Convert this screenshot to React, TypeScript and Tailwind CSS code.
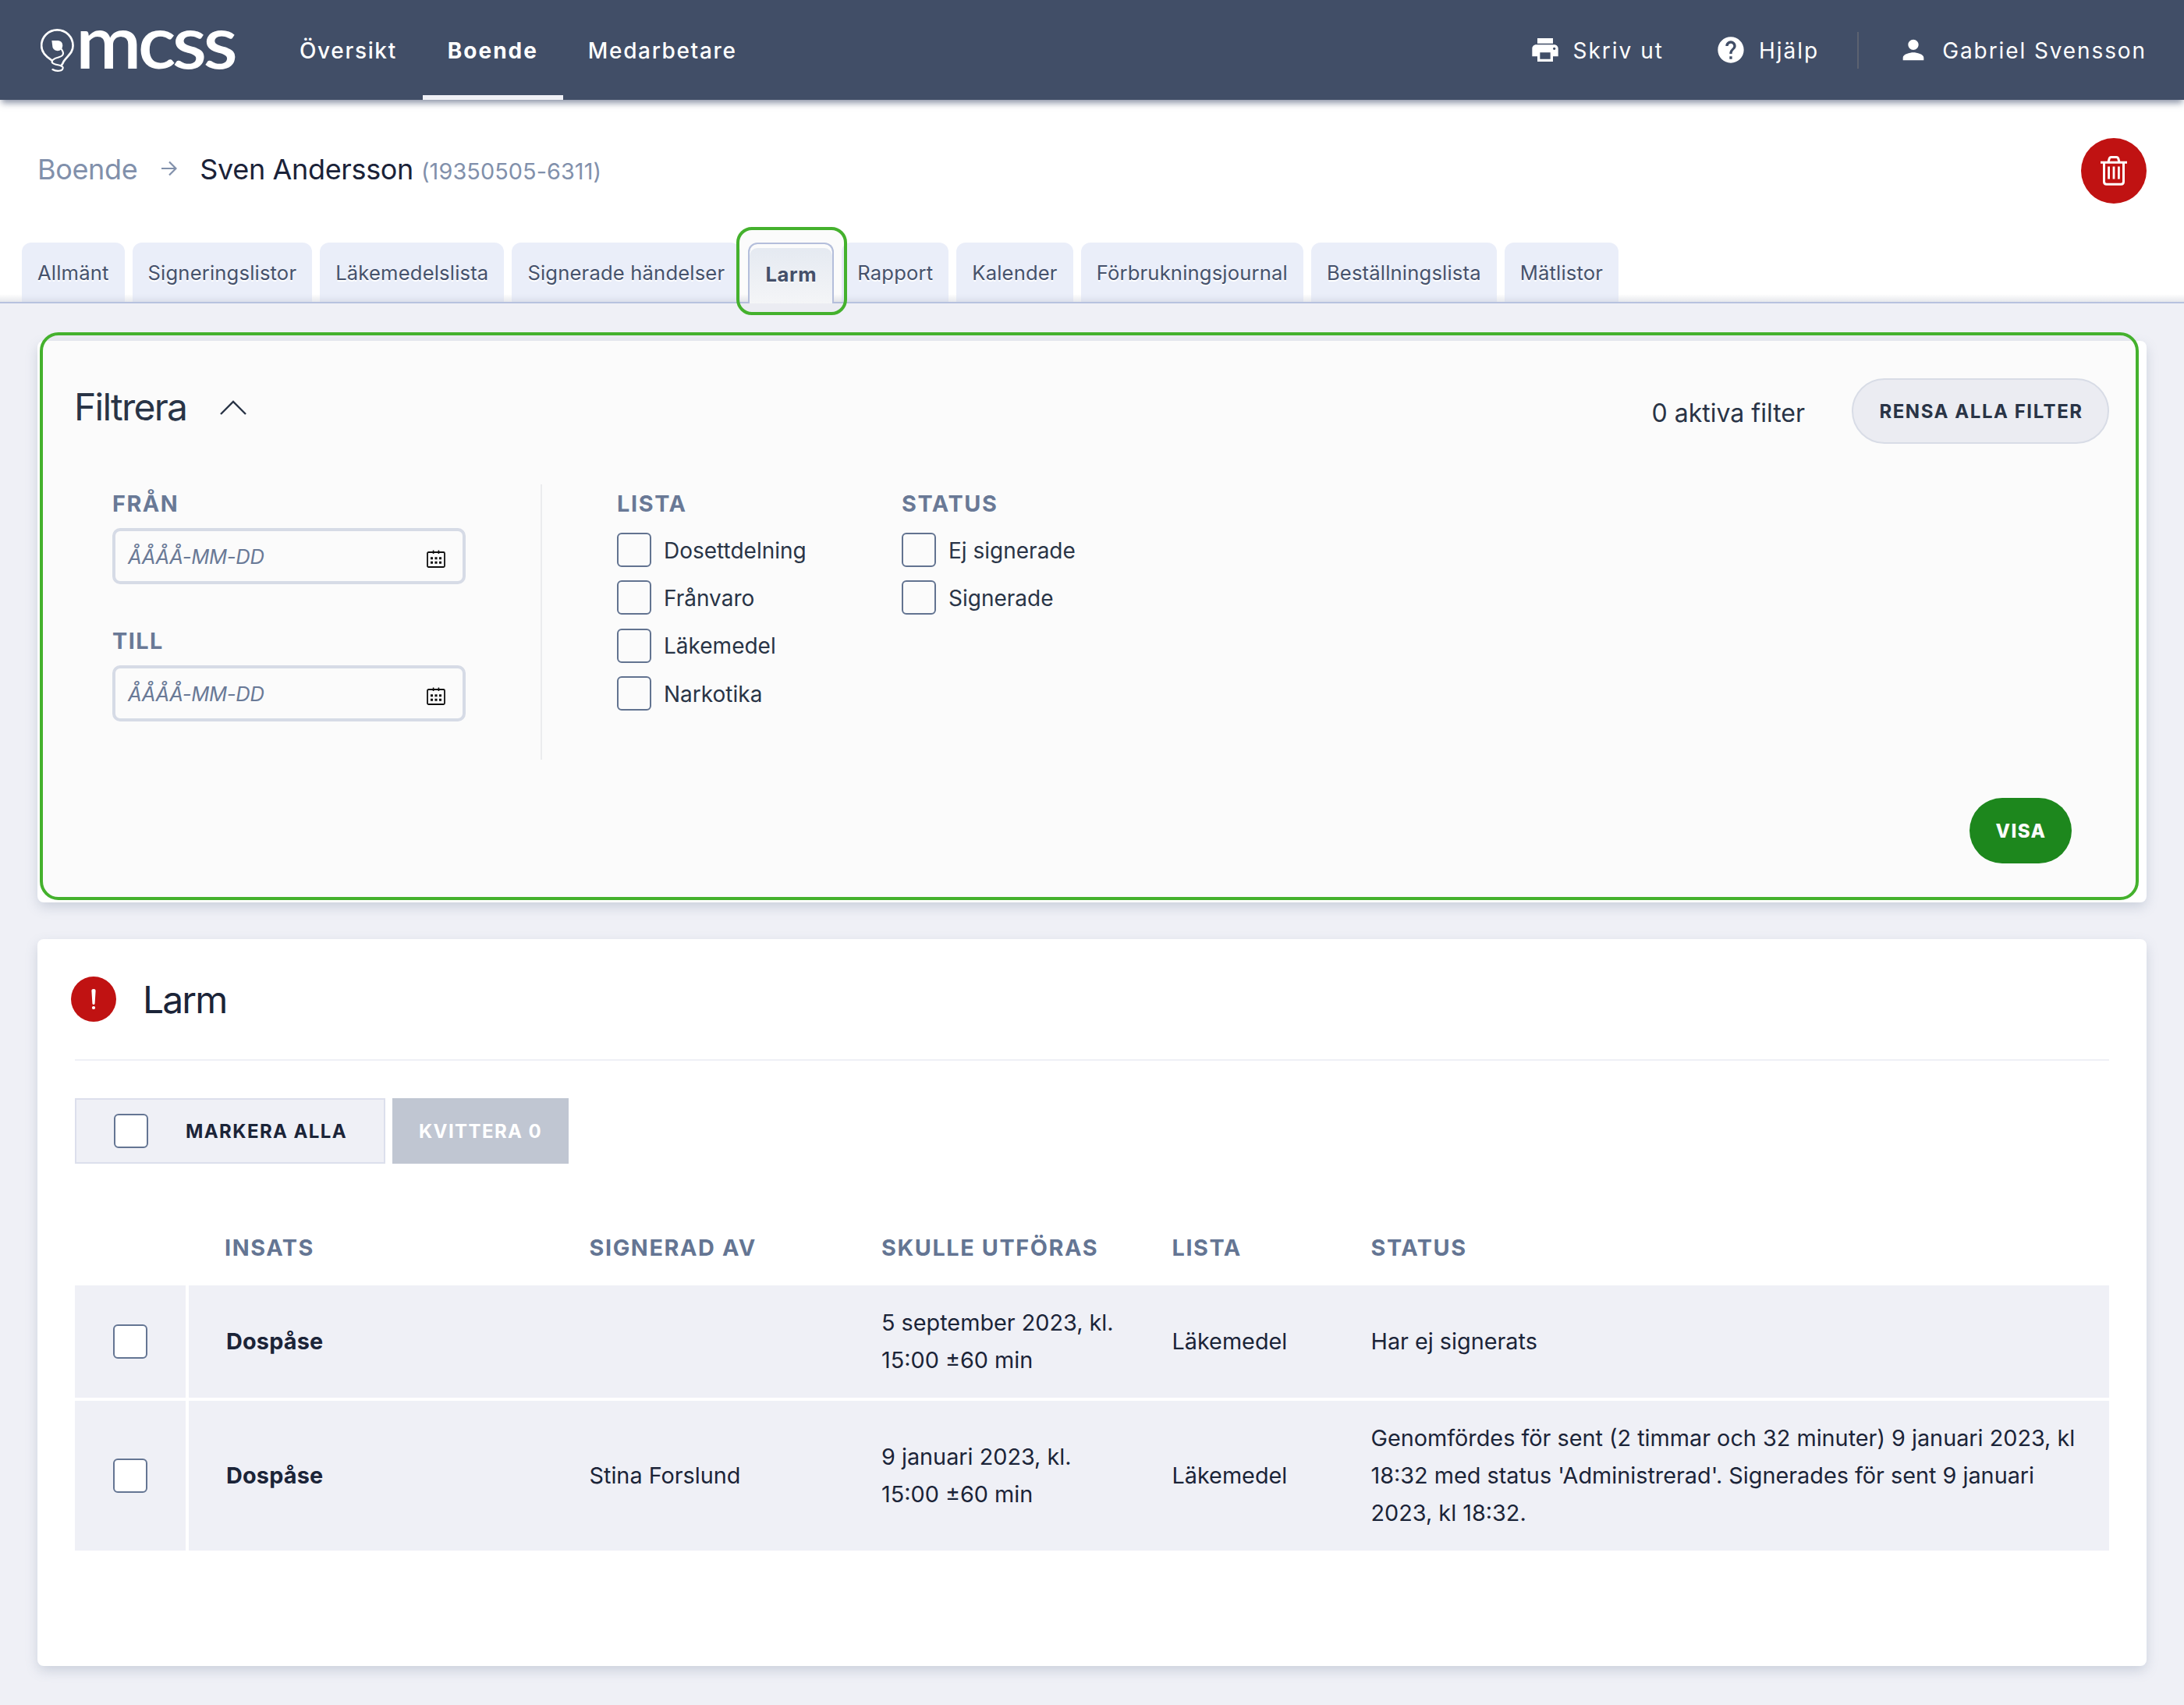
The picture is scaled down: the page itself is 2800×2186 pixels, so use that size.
import { MdHelp, MdPerson, MdPrint } from "react-icons/md"

const navItems = ["Översikt", "Boende", "Medarbetare"]

const tabs = [
  "Allmänt",
  "Signeringslistor",
  "Läkemedelslista",
  "Signerade händelser",
  "Larm",
  "Rapport",
  "Kalender",
  "Förbrukningsjournal",
  "Beställningslista",
  "Mätlistor",
]

const filterGroups = [
  { title: "Lista", options: ["Dosettdelning", "Frånvaro", "Läkemedel", "Narkotika"] },
  { title: "Status", options: ["Ej signerade", "Signerade"] },
]

const alarms = [
  {
    name: "Dospåse",
    signedBy: "",
    planned: "5 september 2023, kl. 15:00 ±60 min",
    list: "Läkemedel",
    status: "Har ej signerats",
    height: "h-36",
  },
  {
    name: "Dospåse",
    signedBy: "Stina Forslund",
    planned: "9 januari 2023, kl. 15:00 ±60 min",
    list: "Läkemedel",
    status:
      "Genomfördes för sent (2 timmar och 32 minuter) 9 januari 2023, kl 18:32 med status 'Administrerad'. Signerades för sent 9 januari 2023, kl 18:32.",
    height: "h-48",
  },
]

function Logo() {
  return (
    <div className="flex w-[331px] shrink-0 items-center pl-[52px]">
      <svg className="h-[57px] w-11 shrink-0" viewBox="35 45 132 172" fill="none" stroke="white" strokeLinecap="round">
        <path
          d="M76 168 C50 152 38 136 38 113 A61 61 0 0 1 160 113 C160 142 138 152 124 174 C121 180 120 186 114 190"
          strokeWidth="8"
        />
        <path d="M78 93 H103 Q120 95 120 113 Q119 133 100 133 Q80 131 80 110 Z" fill="white" stroke="none" />
        <path
          d="M115 126 C127 142 124 153 104 158 C84 163 74 172 81 180 C91 189 119 187 121 197 C123 213 95 214 81 205"
          strokeWidth="6.5"
        />
      </svg>
      <span className="-mt-[25px] ml-px origin-left scale-x-[1.07] font-[Lato,sans-serif] text-[95px] leading-none font-semibold tracking-[-4.4px]">
        mcss
      </span>
    </div>
  )
}

function Header() {
  return (
    <header className="relative z-10 flex h-32 bg-[#414e67] text-[28px] leading-none tracking-[2px] text-white shadow-[0_6px_8px_-2px_rgba(65,79,110,0.6)]">
      <Logo />
      <nav className="flex pl-[21px]">
        {navItems.map((item) => (
          <a
            key={item}
            className={
              item === "Boende"
                ? "ml-px flex w-[180px] items-center justify-center border-y-[6px] border-t-transparent border-b-[#eff0f6] pt-0.5 font-bold"
                : "flex items-center px-8 pt-0.5 font-medium tracking-[1.65px]"
            }
          >
            {item}
          </a>
        ))}
      </nav>
      <div className="ml-auto flex items-center pr-12 whitespace-nowrap">
        <MdPrint className="mr-4 size-10" />
        <span className="pt-0.5">Skriv ut</span>
        <MdHelp className="mr-4 ml-[66px] size-10" />
        <span className="pt-0.5">Hjälp</span>
        <span className="mr-[50px] ml-[49px] h-[47px] w-0.5 bg-[#5c6270]" />
        <MdPerson className="mr-[17px] size-10" />
        <span className="pt-0.5 tracking-[1.9px]">Gabriel Svensson</span>
      </div>
    </header>
  )
}

function PageHead() {
  return (
    <div className="bg-white pt-12">
      <div className="flex h-[84px] items-center justify-between px-12">
        <div className="-mt-0.5 flex items-baseline text-[36px] leading-none tracking-[-0.35px]">
          <span className="text-[#8190ab]">Boende</span>
          <svg className="mr-[29px] ml-[31px] h-5 w-5 -translate-y-1" viewBox="0 0 20 20" fill="none" stroke="#8190ab" strokeWidth="2.2">
            <path d="M0 10 H18 M10 1.5 L18.5 10 L10 18.5" />
          </svg>
          <span className="text-[#1a2238]">Sven Andersson</span>
          <span className="ml-2.5 text-[28.8px] tracking-[0.1px] text-[#8190ab]">(19350505-6311)</span>
        </div>
        <button className="mt-px flex size-[84px] items-center justify-center rounded-full bg-[#c01212]">
          <svg className="h-[38px] w-[34px]" viewBox="0 0 34 38" fill="none" stroke="white">
            <path d="M0 8.3 H34" strokeWidth="3" />
            <path d="M10 8 L11.2 3.4 Q11.8 1.5 13.6 1.5 H20.4 Q22.2 1.5 22.8 3.4 L24 8" strokeWidth="3" />
            <path d="M4.5 8 V33 Q4.5 36.2 7.7 36.2 H26.3 Q29.5 36.2 29.5 33 V8" strokeWidth="3" />
            <path d="M10.6 13.5 V29.5 M17 13.5 V29.5 M23.4 13.5 V29.5" strokeWidth="2.8" />
          </svg>
        </button>
      </div>
      <div className="mt-[51px] flex h-[78px] items-start gap-2.5 border-b-2 border-[#b7c2df] bg-linear-to-t from-[#e6e8ec] to-transparent to-[10px] pl-7 text-[25.6px] leading-none tracking-[0.17px] text-[#46526c] [text-shadow:0_2px_0_#ffffff]">
        {tabs.map((tab) =>
          tab === "Larm" ? (
            <div key={tab} className="relative h-[78px] w-[110px] shrink-0">
              <div className="flex h-full items-center justify-center rounded-t-xl border-x-2 border-t-2 border-[#b7c2df] bg-linear-to-b from-[#e8edf5] to-[#f8f9fb] pt-px font-bold tracking-[0.6px] shadow-[inset_0_5px_0_#ffffff]">
                {tab}
              </div>
              <div className="pointer-events-none absolute -top-5 -left-[15px] z-10 h-[113px] w-[142px] rounded-[20px] border-4 border-[#44b12d] bg-black/[0.015]" />
            </div>
          ) : (
            <div
              key={tab}
              className="flex h-[76px] items-center rounded-t-xl bg-[#eaeef9] px-5 pt-0.5 shadow-[inset_0_-10px_8px_-8px_rgba(60,60,80,0.12)]"
            >
              {tab}
            </div>
          )
        )}
      </div>
    </div>
  )
}

function Checkbox() {
  return <span className="size-11 shrink-0 rounded-md border-2 border-[#647593] bg-white" />
}

function DateField({ label }: { label: string }) {
  return (
    <div className="mb-12">
      <div className="flex h-[49px] items-center pt-0.5 text-[28.8px] leading-none font-bold tracking-[1.5px] text-[#6b7b99] uppercase">
        {label}
      </div>
      <div className="mt-[7px] flex h-[72px] w-[453px] items-center justify-between rounded-[10px] border-4 border-[#dadfea] pr-[22px] pl-4">
        <span className="pt-0.5 text-[25.6px] leading-none tracking-[-0.3px] text-[#6b7b99] italic">ÅÅÅÅ-MM-DD</span>
        <svg className="mt-2 h-6 w-6" viewBox="0 0 24 24" fill="none" stroke="#111">
          <rect x="1" y="3" width="22" height="19" rx="1.5" strokeWidth="1.8" />
          <path d="M8.6 0.5 V5 M15.4 0.5 V5" strokeWidth="1.6" />
          <path d="M5 10.7 H8 M10.5 10.7 H13.5 M16 10.7 H19 M5 16.2 H8 M10.5 16.2 H13.5 M16 16.2 H19" strokeWidth="3" />
        </svg>
      </div>
    </div>
  )
}

function FilterPanel() {
  return (
    <section className="relative h-[720px] rounded-lg bg-white px-12 pt-12 shadow-[0_6px_16px_-1px_rgba(100,117,147,0.28)]">
      <div className="flex h-[84px] items-center text-[#2a3548]">
        <h2 className="mb-[11px] -ml-px text-[48px] leading-none tracking-[-1.75px]">Filtrera</h2>
        <svg className="mb-2.5 ml-[43px] h-[19px] w-[34px]" viewBox="0 0 34 19" fill="none" stroke="#2a3548" strokeWidth="2.4">
          <path d="M1 18 L17 2 L33 18" />
        </svg>
        <span className="mt-[6px] mr-[60px] ml-auto text-[32px] leading-none">0 aktiva filter</span>
        <button className="flex h-[84px] w-[330px] items-center justify-center rounded-full border-2 border-[#dce0ea] bg-[#eff0f6] pt-0.5 pl-0.5 text-[24px] leading-none font-bold tracking-[1.55px]">
          RENSA ALLA FILTER
        </button>
      </div>
      <div className="mt-[52px] flex h-[353px] pl-12">
        <div className="w-[551px] shrink-0 border-r-2 border-[#eff0f2]">
          <DateField label="Från" />
          <DateField label="Till" />
        </div>
        {filterGroups.map((group) => (
          <div key={group.title} className="w-[365px] shrink-0 nth-2:ml-24">
            <div className="flex h-[49px] items-center pt-0.5 text-[28.8px] leading-none font-bold tracking-[1.65px] text-[#6b7b99] uppercase">
              {group.title}
            </div>
            <div className="mt-[13px] flex flex-col gap-[17.4px]">
              {group.options.map((option) => (
                <label key={option} className="flex items-center gap-4 text-[28px] leading-none text-[#2a3548]">
                  <Checkbox />
                  <span className="pt-px">{option}</span>
                </label>
              ))}
            </div>
          </div>
        ))}
      </div>
      <div className="mt-[49px] flex justify-end pr-12">
        <button className="flex h-[84px] w-[131px] items-center justify-center rounded-full bg-[#1e8a1e] pt-0.5 pl-px text-[24px] leading-none font-extrabold tracking-[1.5px] text-white">
          VISA
        </button>
      </div>
      {/* Highlight frame on top of the panel */}
      <div className="pointer-events-none absolute -top-[11px] left-[3px] h-[728px] w-[2691px] rounded-3xl border-4 border-[#44b12d] bg-black/[0.015]" />
    </section>
  )
}

const columns = "grid grid-cols-[142px_517.5px_374.5px_372.5px_255px_1fr] items-center"

function AlarmPanel() {
  return (
    <section className="mt-[47px] h-[932px] rounded-lg bg-white px-12 pt-12 text-[#1b2438] shadow-[0_6px_16px_-1px_rgba(100,117,147,0.28)]">
      <div className="flex items-center">
        <span className="-ml-[5px] flex size-[58px] items-center justify-center rounded-full bg-[#c01212]">
          <svg className="h-[26px] w-[6px]" viewBox="0 0 6 26" fill="white">
            <path d="M0.4 2.4 Q0.4 0 3 0 Q5.6 0 5.6 2.4 L4.6 18.4 Q4.4 20 3 20 Q1.6 20 1.4 18.4 Z" />
            <circle cx="3" cy="24" r="2.1" />
          </svg>
        </span>
        <h2 className="ml-[34px] pt-0.5 text-[48px] leading-none tracking-[-1.9px]">Larm</h2>
      </div>
      <div className="mt-12 h-0.5 bg-[#eff0f6]" />
      <div className="mt-12 flex gap-[9px] text-[24px] leading-none font-bold tracking-[1.4px]">
        <button className="flex h-[84px] w-[398px] items-center gap-12 border-2 border-[#dcdfec] bg-[#eff0f6] pl-12">
          <Checkbox />
          <span className="pt-0.5">MARKERA ALLA</span>
        </button>
        <button className="flex h-[84px] w-[226px] items-center justify-center bg-[#c0c6d2] pt-0.5 text-white">
          KVITTERA 0
        </button>
      </div>
      <div className={`${columns} mt-[60px] h-24 text-[28.8px] leading-none font-bold tracking-[1.6px] text-[#647593]`}>
        <span />
        <span className="pl-[50px]">INSATS</span>
        <span>SIGNERAD AV</span>
        <span>SKULLE UTFÖRAS</span>
        <span>LISTA</span>
        <span>STATUS</span>
      </div>
      <div className="flex flex-col gap-1 text-[28.8px] leading-[48px]">
        {alarms.map((alarm, index) => (
          <div key={index} className={`${columns} ${alarm.height} bg-[#eff0f6]`}>
            <div className="flex h-full items-center justify-center">
              <Checkbox />
            </div>
            <div className="flex h-full items-center border-l-4 border-white pl-12 font-bold tracking-[0.2px]">{alarm.name}</div>
            <div>{alarm.signedBy}</div>
            <div className="pr-14">{alarm.planned}</div>
            <div>{alarm.list}</div>
            <div className="pr-8">{alarm.status}</div>
          </div>
        ))}
      </div>
    </section>
  )
}

export default function App() {
  return (
    <div className="h-[2186px] w-[2800px] overflow-hidden bg-[#eff0f6] font-[Inter,sans-serif]">
      <Header />
      <PageHead />
      <main className="px-12 pt-12">
        <FilterPanel />
        <AlarmPanel />
      </main>
    </div>
  )
}
